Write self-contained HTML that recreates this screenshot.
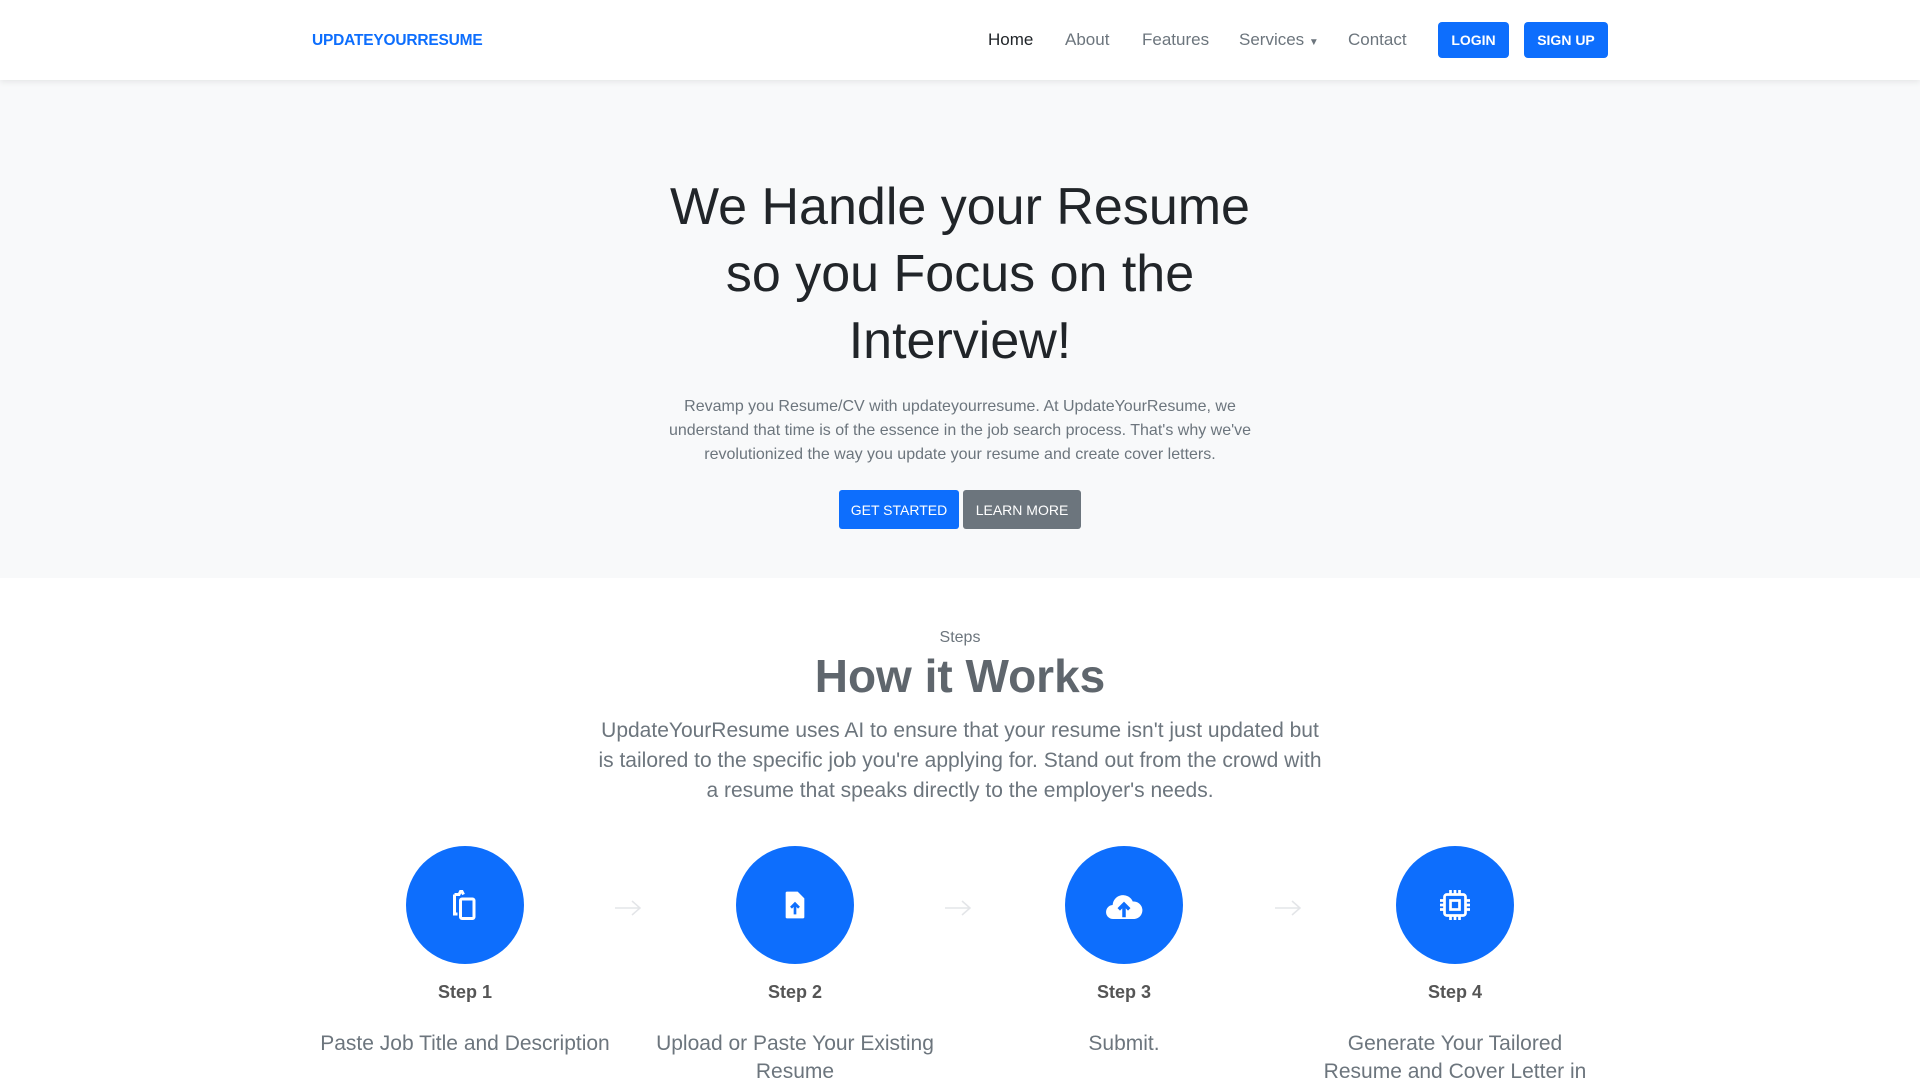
<!DOCTYPE html>
<html><head><meta charset="utf-8"><style>
*{margin:0;padding:0;box-sizing:border-box}
body{width:1920px;height:1080px;overflow:hidden;font-family:"Liberation Sans",sans-serif;background:#fff;position:relative}
.nav{position:absolute;top:0;left:0;width:1920px;height:80px;background:#fff;box-shadow:0 2px 6px rgba(0,0,0,.08);z-index:2}
.logo{position:absolute;left:312px;top:32px;font-size:15.5px;font-weight:bold;color:#0d6efd;letter-spacing:-0.2px}
.nl{position:absolute;top:30px;font-size:17px;color:#6c757d}
.btn{position:absolute;top:22px;height:36px;background:#0d6efd;color:#fff;font-weight:bold;font-size:14px;border-radius:4px;display:flex;align-items:center;justify-content:center}
.hero{position:absolute;top:80px;left:0;width:1920px;height:498px;background:#f8f9fa}
.c{position:absolute;left:0;width:1920px;text-align:center}
h1{font-weight:normal;font-size:52px;line-height:67px;color:#212529}
.hp{font-size:16px;line-height:24px;color:#6c757d;width:600px;margin:0 auto}
.b2{position:absolute;top:490px;height:39px;color:#fff;font-size:14px;display:flex;align-items:center;justify-content:center;border-radius:3px}
.circ{position:absolute;top:846px;width:118px;height:118px;border-radius:50%;background:#0d6efd;display:flex;align-items:center;justify-content:center}
.arr{position:absolute;top:898px}
.sl{position:absolute;top:982px;width:300px;text-align:center;font-weight:bold;font-size:18px;color:#555}
.sd{position:absolute;top:1030px;width:300px;text-align:center;font-size:21px;line-height:28px;color:#6c757d}
</style></head><body>
<div class="nav">
<div class="logo">UPDATEYOURRESUME</div>
<div class="nl" style="left:988px;color:#212529">Home</div>
<div class="nl" style="left:1065px">About</div>
<div class="nl" style="left:1142px">Features</div>
<div class="nl" style="left:1239px">Services <span style="font-size:10px">▼</span></div>
<div class="nl" style="left:1348px">Contact</div>
<div class="btn" style="left:1438px;width:71px">LOGIN</div>
<div class="btn" style="left:1524px;width:84px">SIGN UP</div>
</div>
<div class="hero"></div>
<div class="c" style="top:174px"><h1>We Handle your Resume<br>so you Focus on the<br>Interview!</h1></div>
<div class="c" style="top:395px"><p class="hp">Revamp you Resume/CV with updateyourresume. At UpdateYourResume, we understand that time is of the essence in the job search process. That's why we've revolutionized the way you update your resume and create cover letters.</p></div>
<div class="b2" style="left:839px;width:120px;background:#0d6efd">GET STARTED</div>
<div class="b2" style="left:963px;width:118px;background:#6c757d">LEARN MORE</div>
<div class="c" style="top:629px;font-size:16px;color:#6c757d">Steps</div>
<div class="c" style="top:649px;font-size:46px;font-weight:bold;color:#5f666d">How it Works</div>
<div class="c" style="top:716px"><p style="font-size:21px;line-height:30px;color:#6c757d;width:730px;margin:0 auto">UpdateYourResume uses AI to ensure that your resume isn't just updated but is tailored to the specific job you're applying for. Stand out from the crowd with a resume that speaks directly to the employer's needs.</p></div>

<div class="circ" style="left:406px"><svg width="36" height="36" viewBox="0 0 24 24" fill="none" stroke="#fff" stroke-width="2"><path d="M5 5v13h2M5 5h3l1-2h1l1 2"/><rect x="9" y="8" width="9" height="13" rx="1"/></svg></div>
<div class="circ" style="left:736px"><svg width="32" height="36" viewBox="0 0 24 24"><path d="M6 2h8l5 5v14a1 1 0 0 1-1 1H6a1 1 0 0 1-1-1V3a1 1 0 0 1 1-1z" fill="#fff"/><path d="M12 19v-7M9 14l3-3 3 3" stroke="#0d6efd" stroke-width="2" fill="none"/></svg></div>
<div class="circ" style="left:1065px"><svg width="42" height="36" viewBox="0 0 24 20"><path d="M6 18a4 4 0 0 1-.5-8A6 6 0 0 1 17 8a5 5 0 0 1 1 10z" fill="#fff"/><path d="M12 17v-7M9 12.5l3-3 3 3" stroke="#0d6efd" stroke-width="2" fill="none"/></svg></div>
<div class="circ" style="left:1396px"><svg width="36" height="36" viewBox="0 0 24 24" fill="none" stroke="#fff" stroke-width="1.8"><rect x="5" y="5" width="14" height="14" rx="1.5"/><rect x="9" y="9" width="6" height="6"/><path d="M9 2v3M12 2v3M15 2v3M9 19v3M12 19v3M15 19v3M2 9h3M2 12h3M2 15h3M19 9h3M19 12h3M19 15h3"/></svg></div>
<svg class="arr" style="left:614px" width="28" height="20" viewBox="0 0 28 20" fill="none" stroke="#e3e5e8" stroke-width="1.5"><path d="M1 10h25M18 3l8 7-8 7"/></svg>
<svg class="arr" style="left:944px" width="28" height="20" viewBox="0 0 28 20" fill="none" stroke="#e3e5e8" stroke-width="1.5"><path d="M1 10h25M18 3l8 7-8 7"/></svg>
<svg class="arr" style="left:1274px" width="28" height="20" viewBox="0 0 28 20" fill="none" stroke="#e3e5e8" stroke-width="1.5"><path d="M1 10h25M18 3l8 7-8 7"/></svg>
<div class="sl" style="left:315px">Step 1</div>
<div class="sl" style="left:645px">Step 2</div>
<div class="sl" style="left:974px">Step 3</div>
<div class="sl" style="left:1305px">Step 4</div>
<div class="sd" style="left:300px;width:330px">Paste Job Title and Description</div>
<div class="sd" style="left:655px;width:280px">Upload or Paste Your Existing Resume</div>
<div class="sd" style="left:974px">Submit.</div>
<div class="sd" style="left:1310px;width:290px">Generate Your Tailored Resume and Cover Letter in</div>
</body></html>
